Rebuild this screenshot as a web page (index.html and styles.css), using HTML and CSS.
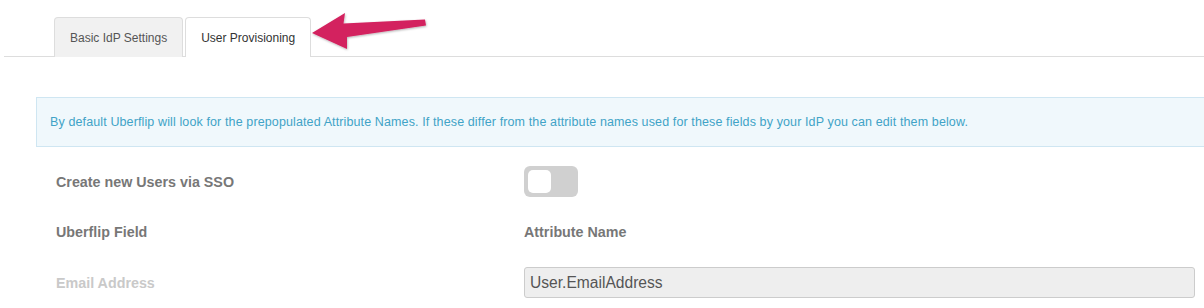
FILE: index.html
```html
<!DOCTYPE html>
<html>
<head>
<meta charset="utf-8">
<link rel="stylesheet" href="styles.css">
</head>
<body>
<div class="page">
  <div class="tabs">
    <div class="tab">Basic IdP Settings</div>
    <div class="tab active">User Provisioning</div>
  </div>
  <svg class="arrow" width="440" height="60" viewBox="0 0 440 60" aria-hidden="true">
    <defs>
      <filter id="sh" x="-10%" y="-20%" width="130%" height="160%">
        <feDropShadow dx="0.5" dy="1" stdDeviation="0.8" flood-color="#000" flood-opacity="0.3"/>
      </filter>
    </defs>
    <polygon points="312,33 345,13 343.5,23.5 425,19.5 426,25.5 347,37 347,49" fill="#d3215e" filter="url(#sh)"/>
  </svg>
  <div class="info">By default Uberflip will look for the prepopulated Attribute Names. If these differ from the attribute names used for these fields by your IdP you can edit them below.</div>
  <div class="form">
    <div class="label">Create new Users via SSO</div>
    <div class="value"><span class="toggle"><span class="knob"></span></span></div>
    <div class="label">Uberflip Field</div>
    <div class="value label">Attribute Name</div>
    <div class="label muted">Email Address</div>
    <div class="value"><div class="input">User.EmailAddress</div></div>
  </div>
</div>
</body>
</html>
```
FILE: styles.css
```css
html, body {
  margin: 0;
  padding: 0;
  background: #fff;
  overflow: hidden;
}
body {
  font-family: "Liberation Sans", Arial, Helvetica, sans-serif;
  width: 1204px;
  height: 308px;
}
.page {
  position: relative;
}
.tabs {
  display: flex;
  gap: 2px;
  margin-left: 4px;
  padding-top: 17px;
  padding-left: 50px;
  border-bottom: 1px solid #ddd;
  height: 39px;
}
.tab {
  box-sizing: border-box;
  height: 40px;
  padding: 0 15px;
  border: 1px solid #ddd;
  border-bottom: none;
  border-radius: 4px 4px 0 0;
  background: #f1f1f1;
  color: #555;
  font-size: 12px;
  display: flex;
  align-items: center;
}
.tab.active {
  background: #fff;
  color: #333;
}
.arrow {
  position: absolute;
  left: 0;
  top: 0;
}
.info {
  margin: 40px -10px 0 36px;
  padding: 16px 13px;
  line-height: 16px;
  background: #f0f8fc;
  border: 1px solid #cfe6f2;
  color: #41a3c7;
  font-size: 12.5px;
  letter-spacing: 0.12px;
  white-space: nowrap;
}
.form {
  display: grid;
  grid-template-columns: 468px 1fr;
  grid-auto-rows: 31px;
  row-gap: 19.5px;
  margin-top: 19px;
  padding: 0 9px 0 56px;
}
.label {
  font-size: 14.3px;
  font-weight: bold;
  color: #777;
  display: flex;
  align-items: center;
}
.label.muted {
  color: #c9c9c9;
}
.value {
  display: flex;
  align-items: center;
}
.toggle {
  box-sizing: border-box;
  width: 54px;
  height: 31px;
  background: #d0d0d0;
  border-radius: 6px;
  padding: 4px;
  display: flex;
}
.knob {
  width: 23px;
  height: 23px;
  background: #fff;
  border-radius: 5px;
}
.input {
  box-sizing: border-box;
  width: 100%;
  height: 31px;
  background: #eee;
  border: 1px solid #ccc;
  border-radius: 3px;
  padding-left: 5px;
  font-size: 15.6px;
  color: #555;
  display: flex;
  align-items: center;
}
```
